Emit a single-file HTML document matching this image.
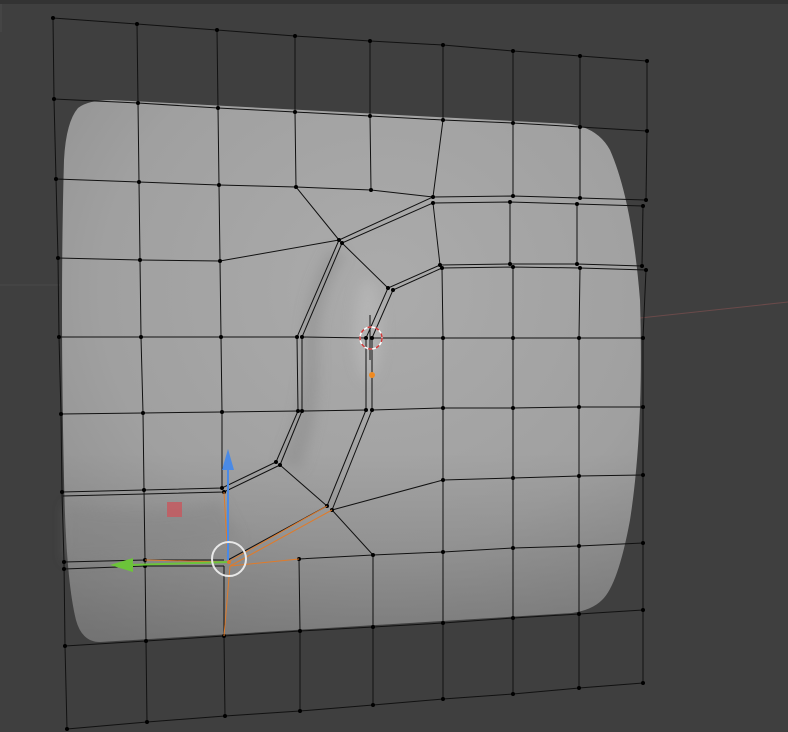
<!DOCTYPE html>
<html><head><style>html,body{margin:0;padding:0;background:#3f3f3f;overflow:hidden}svg{display:block}</style></head>
<body>
<svg width="788" height="732" viewBox="0 0 788 732" xmlns="http://www.w3.org/2000/svg">
<defs>
<radialGradient id="g1" cx="0.55" cy="0.35" r="0.8">
<stop offset="0" stop-color="#ababab"/><stop offset="0.6" stop-color="#a0a0a0"/><stop offset="1" stop-color="#8c8c8c"/>
</radialGradient>
<linearGradient id="g2" x1="0" y1="0" x2="0" y2="1">
<stop offset="0" stop-color="#000" stop-opacity="0"/><stop offset="0.65" stop-color="#000" stop-opacity="0"/><stop offset="1" stop-color="#000" stop-opacity="0.18"/>
</linearGradient>
<radialGradient id="hl" cx="0.5" cy="0.5" r="0.5">
<stop offset="0" stop-color="#c0c0c0" stop-opacity="0.6"/><stop offset="1" stop-color="#c0c0c0" stop-opacity="0"/>
</radialGradient>
<radialGradient id="dk" cx="0.5" cy="0.5" r="0.5">
<stop offset="0" stop-color="#707070" stop-opacity="0.45"/><stop offset="1" stop-color="#707070" stop-opacity="0"/>
</radialGradient>
<filter id="bl"><feGaussianBlur stdDeviation="6"/></filter>
</defs>
<rect x="0" y="0" width="788" height="4" fill="#333"/>
<rect x="0" y="4" width="2" height="28" fill="#454545"/>
<line x1="640" y1="318" x2="788" y2="302" stroke="#6a4a4a" stroke-width="1"/>
<line x1="0" y1="285" x2="60" y2="285" stroke="#4a4a4a" stroke-width="1"/>
<!-- surface -->
<path id="surf" d="M112,100 L570,124 Q598,128 610,150 Q632,200 640,300 Q644,430 630,520 Q618,585 602,600 Q592,610 572,613 L100,642 Q82,642 76,620 Q66,580 64,480 Q60,300 64,160 Q66,122 78,108 Q88,100 112,100 Z" fill="url(#g1)"/>
<path d="M112,100 L570,124 Q598,128 610,150 Q632,200 640,300 Q644,430 630,520 Q618,585 602,600 Q592,610 572,613 L100,642 Q82,642 76,620 Q66,580 64,480 Q60,300 64,160 Q66,122 78,108 Q88,100 112,100 Z" fill="url(#g2)"/>
<!-- hole shading -->
<g filter="url(#bl)">
<path d="M330,250 Q300,300 305,360 Q300,420 280,462 L300,470 Q320,420 318,360 Q315,300 345,255 Z" fill="#8a8a8a" opacity="0.5"/>
<ellipse cx="368" cy="330" rx="14" ry="50" fill="#bcbcbc" opacity="0.55"/>
<path d="M66,505 Q150,520 220,500 L240,540 Q150,560 66,560 Z" fill="#858585" opacity="0.45"/>
</g>
<g fill="none" stroke="#111" stroke-width="1">
<polyline points="53,18 137,24 217,30 295,36 370,41 443,45 513,51 580,56 647,61"/>
<polyline points="54,99 138,103 218,108 295,112 370,116 443,120 513,123 580,127 647,131"/>
<polyline points="56,179 139,182 219,185 296,187 371,190 433,197 513,196 580,198 646,200"/>
<polyline points="433,203 510,202 577,204 643,206"/>
<polyline points="58,258 140,260 220,261 339,240"/>
<polyline points="440,265 510,264 577,264 642,266"/>
<polyline points="442,268 513,267 580,268 646,270"/>
<polyline points="59,337 141,337 221,337 297,337"/>
<polyline points="302,337 366,338"/>
<polyline points="372,338 443,338 513,338 579,338 643,338"/>
<polyline points="61,414 143,413 222,412 298,411"/>
<polyline points="302,411 366,410"/>
<polyline points="372,410 443,408 513,408 579,407 643,407"/>
<polyline points="62,492 144,490 222,488 276,462"/>
<polyline points="63,496 145,494 224,492 280,465"/>
<polyline points="332,510 443,480 513,478 579,476 643,475"/>
<polyline points="64,562 145,560 224,560"/>
<polyline points="64,569 145,566 224,566"/>
<polyline points="299,559 373,555 443,552 513,548 579,546 643,543"/>
<polyline points="65,646 146,641 224,636 300,631 373,627 443,623 513,618 579,614 643,610"/>
<polyline points="67,729 147,722 225,716 300,711 373,705 443,699 513,694 579,688 643,683"/>
<polyline points="53,18 54,99 56,179 58,258 59,337 61,414 62,492 64,562 65,646 67,729"/>
<polyline points="137,24 138,103 139,182 140,260 141,337 143,413 144,490 145,560 146,641 147,722"/>
<polyline points="217,30 218,108 219,185 220,261 221,337 222,412 222,488"/>
<polyline points="224,566 224,636 225,716"/>
<polyline points="295,36 295,112 296,187 339,240"/>
<polyline points="299,559 300,631 300,711"/>
<polyline points="370,41 370,116 371,190"/>
<polyline points="373,555 373,627 373,705"/>
<polyline points="443,45 443,120 433,197"/>
<polyline points="433,203 440,265"/>
<polyline points="442,268 443,338 443,408 443,480 443,552 443,623 443,699"/>
<polyline points="513,51 513,123 513,196"/>
<polyline points="510,202 510,264"/>
<polyline points="513,267 513,338 513,408 513,478 513,548 513,618 513,694"/>
<polyline points="580,56 580,127 580,198"/>
<polyline points="577,204 577,264"/>
<polyline points="580,268 579,338 579,407 579,476 579,546 579,614 579,688"/>
<polyline points="647,61 647,131 646,200"/>
<polyline points="643,206 642,266"/>
<polyline points="646,270 643,338 643,407 643,475 643,543 643,610 643,683"/>
<polyline points="433,197 339,240 297,337 298,411 276,462"/>
<polyline points="433,203 342,243 302,337 302,411 280,465"/>
<polyline points="440,265 388,288 366,338 366,410 327,506 228,560"/>
<polyline points="442,268 393,290 372,338 372,410 332,510"/>
<line x1="342" y1="243" x2="388" y2="288"/>
<line x1="280" y1="465" x2="327" y2="506"/>
<line x1="332" y1="510" x2="373" y2="555"/>
<line x1="370" y1="315" x2="370" y2="360"/>
</g>
<g fill="#000">
<circle cx="53" cy="18" r="2"/><circle cx="137" cy="24" r="2"/><circle cx="217" cy="30" r="2"/><circle cx="295" cy="36" r="2"/><circle cx="370" cy="41" r="2"/><circle cx="443" cy="45" r="2"/><circle cx="513" cy="51" r="2"/><circle cx="580" cy="56" r="2"/><circle cx="647" cy="61" r="2"/>
<circle cx="54" cy="99" r="2"/><circle cx="138" cy="103" r="2"/><circle cx="218" cy="108" r="2"/><circle cx="295" cy="112" r="2"/><circle cx="370" cy="116" r="2"/><circle cx="443" cy="120" r="2"/><circle cx="513" cy="123" r="2"/><circle cx="580" cy="127" r="2"/><circle cx="647" cy="131" r="2"/>
<circle cx="56" cy="179" r="2"/><circle cx="139" cy="182" r="2"/><circle cx="219" cy="185" r="2"/><circle cx="296" cy="187" r="2"/><circle cx="371" cy="190" r="2"/><circle cx="433" cy="197" r="2"/><circle cx="433" cy="203" r="2"/><circle cx="513" cy="196" r="2"/><circle cx="510" cy="202" r="2"/><circle cx="580" cy="198" r="2"/><circle cx="577" cy="204" r="2"/><circle cx="646" cy="200" r="2"/><circle cx="643" cy="206" r="2"/>
<circle cx="58" cy="258" r="2"/><circle cx="140" cy="260" r="2"/><circle cx="220" cy="261" r="2"/><circle cx="339" cy="240" r="2"/><circle cx="342" cy="243" r="2"/><circle cx="388" cy="288" r="2"/><circle cx="393" cy="290" r="2"/><circle cx="440" cy="265" r="2"/><circle cx="442" cy="268" r="2"/><circle cx="510" cy="264" r="2"/><circle cx="513" cy="267" r="2"/><circle cx="577" cy="264" r="2"/><circle cx="580" cy="268" r="2"/><circle cx="642" cy="266" r="2"/><circle cx="646" cy="270" r="2"/>
<circle cx="59" cy="337" r="2"/><circle cx="141" cy="337" r="2"/><circle cx="221" cy="337" r="2"/><circle cx="297" cy="337" r="2"/><circle cx="302" cy="337" r="2"/><circle cx="366" cy="338" r="2"/><circle cx="372" cy="338" r="2"/><circle cx="443" cy="338" r="2"/><circle cx="513" cy="338" r="2"/><circle cx="579" cy="338" r="2"/><circle cx="643" cy="338" r="2"/>
<circle cx="61" cy="414" r="2"/><circle cx="143" cy="413" r="2"/><circle cx="222" cy="412" r="2"/><circle cx="298" cy="411" r="2"/><circle cx="302" cy="411" r="2"/><circle cx="366" cy="410" r="2"/><circle cx="372" cy="410" r="2"/><circle cx="443" cy="408" r="2"/><circle cx="513" cy="408" r="2"/><circle cx="579" cy="407" r="2"/><circle cx="643" cy="407" r="2"/>
<circle cx="62" cy="492" r="2"/><circle cx="144" cy="490" r="2"/><circle cx="222" cy="488" r="2"/><circle cx="224" cy="492" r="2"/><circle cx="276" cy="462" r="2"/><circle cx="280" cy="465" r="2"/><circle cx="327" cy="506" r="2"/><circle cx="332" cy="510" r="2"/><circle cx="443" cy="480" r="2"/><circle cx="513" cy="478" r="2"/><circle cx="579" cy="476" r="2"/><circle cx="643" cy="475" r="2"/>
<circle cx="64" cy="562" r="2"/><circle cx="64" cy="569" r="2"/><circle cx="145" cy="560" r="2"/><circle cx="145" cy="566" r="2"/><circle cx="299" cy="559" r="2"/><circle cx="373" cy="555" r="2"/><circle cx="443" cy="552" r="2"/><circle cx="513" cy="548" r="2"/><circle cx="579" cy="546" r="2"/><circle cx="643" cy="543" r="2"/>
<circle cx="65" cy="646" r="2"/><circle cx="146" cy="641" r="2"/><circle cx="224" cy="636" r="2"/><circle cx="300" cy="631" r="2"/><circle cx="373" cy="627" r="2"/><circle cx="443" cy="623" r="2"/><circle cx="513" cy="618" r="2"/><circle cx="579" cy="614" r="2"/><circle cx="643" cy="610" r="2"/>
<circle cx="67" cy="729" r="2"/><circle cx="147" cy="722" r="2"/><circle cx="225" cy="716" r="2"/><circle cx="300" cy="711" r="2"/><circle cx="373" cy="705" r="2"/><circle cx="443" cy="699" r="2"/><circle cx="513" cy="694" r="2"/><circle cx="579" cy="688" r="2"/><circle cx="643" cy="683" r="2"/>
</g>
<g stroke="#e07b2a" stroke-width="1" fill="none">
<line x1="228" y1="562" x2="327" y2="506"/>
<line x1="230" y1="566" x2="332" y2="510"/>
<line x1="228" y1="562" x2="145" y2="560"/>
<line x1="230" y1="566" x2="299" y2="559"/>
<line x1="228" y1="562" x2="224" y2="492"/>
<line x1="230" y1="566" x2="224" y2="636"/>
</g>
<line x1="228" y1="562" x2="228" y2="468" stroke="#4a8ae6" stroke-width="2"/>
<polygon points="228,449 222,470 234,470" fill="#4a8ae6"/>
<line x1="228" y1="562" x2="130" y2="565" stroke="#6cc43a" stroke-width="2"/>
<polygon points="110,565 133,558 133,572" fill="#6cc43a"/>
<circle cx="229" cy="559" r="17" fill="none" stroke="#e8e8e8" stroke-width="2"/>
<circle cx="229" cy="562" r="2" fill="#e07b2a"/>
<rect x="167" y="502" width="15" height="15" fill="#c45a60" opacity="0.85"/>
<circle cx="371" cy="338" r="11" fill="none" stroke="#fff" stroke-width="1.5"/>
<circle cx="371" cy="338" r="11" fill="none" stroke="#d03a3a" stroke-width="1.5" stroke-dasharray="4 4"/>
<circle cx="372" cy="375" r="3" fill="#f08a20"/>
</svg>
</body></html>
